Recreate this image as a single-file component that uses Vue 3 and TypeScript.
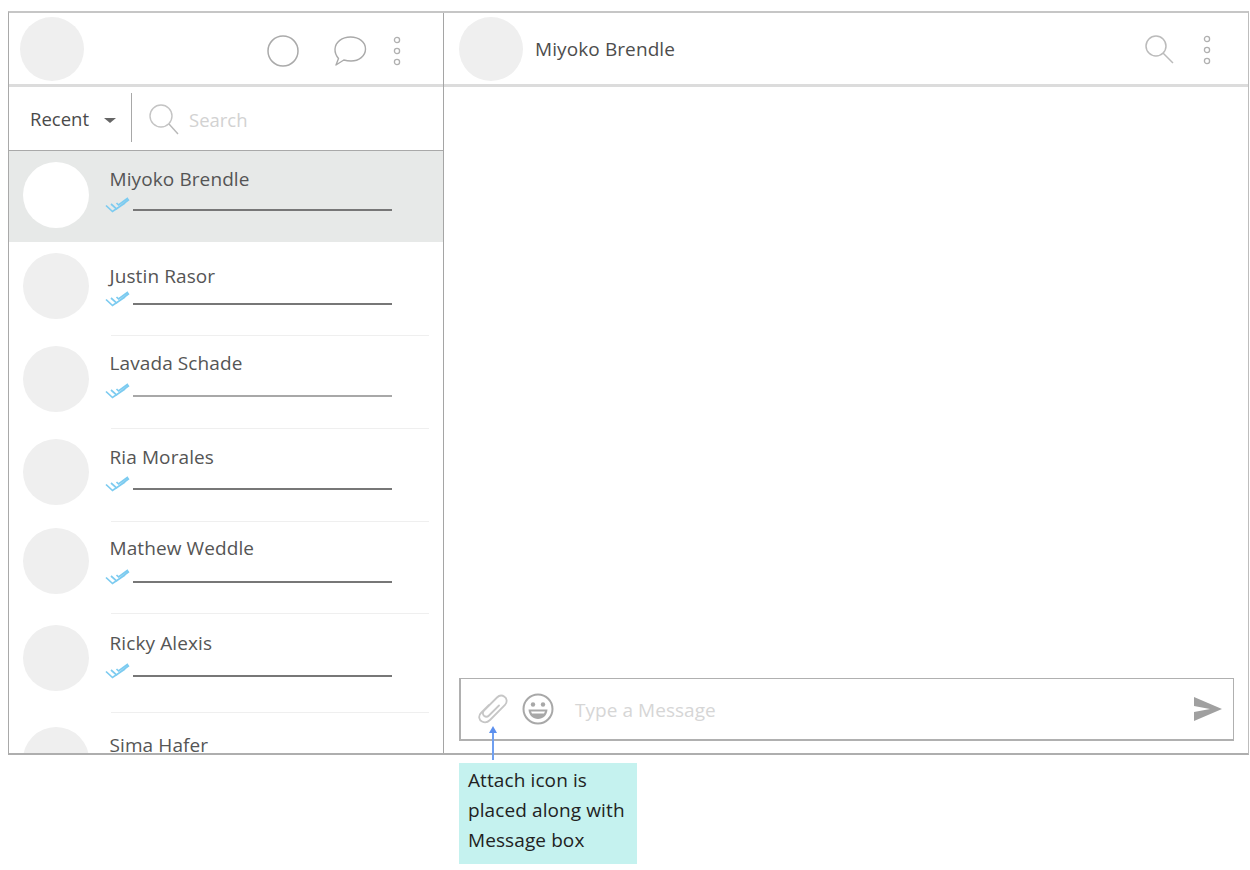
<script setup lang="ts">
interface Row { name: string; h: number; av: number; nameTop: number; lineTop: number; active?: boolean; divider?: boolean }
const rows: Row[] = [
  { name: 'Miyoko Brendle', h: 91, av: 11, nameTop: 15, lineTop: 58, active: true },
  { name: 'Justin Rasor', h: 93, av: 11, nameTop: 21, lineTop: 61, divider: true },
  { name: 'Lavada Schade', h: 93, av: 11, nameTop: 15, lineTop: 60, divider: true },
  { name: 'Ria Morales', h: 93, av: 11, nameTop: 16, lineTop: 60, divider: true },
  { name: 'Mathew Weddle', h: 92, av: 7, nameTop: 14, lineTop: 60, divider: true },
  { name: 'Ricky Alexis', h: 99, av: 12, nameTop: 17, lineTop: 62, divider: true },
  { name: 'Sima Hafer', h: 60, av: 15, nameTop: 20, lineTop: 200 }
]
const lineColor = (i: number) => (i === 2 ? '#a8a8a8' : '#777')
</script>

<template>
  <div class="page">
    <div class="frame">
      <aside class="left">
        <header class="head">
          <div class="avatar big"></div>
          <div class="head-icons">
            <svg width="34" height="34" viewBox="0 0 34 34"><circle cx="17" cy="17" r="15" fill="none" stroke="#aaa" stroke-width="1.5" /></svg>
            <svg class="bubble" width="34" height="32" viewBox="0 0 34 32"><path d="M3 30 L5.500 23.500 C3 20.500 1.800 17.500 2 14 C2.500 7 9 2 17.500 2 C26 2 32.500 7 32.500 14 C32.500 21 26 26 18 26 C15.500 26 13 25.600 10.800 25 Z" fill="none" stroke="#aaa" stroke-width="1.400" stroke-linejoin="round" /></svg>
            <svg class="dots" width="10" height="32" viewBox="0 0 10 32"><circle cx="5" cy="5" r="2.600" /><circle cx="5" cy="16" r="2.600" /><circle cx="5" cy="27" r="2.600" /></svg>
          </div>
        </header>
        <div class="filter">
          <span class="recent">Recent</span>
          <span class="caret"></span>
          <span class="sep"></span>
          <svg class="search-icon" width="32" height="34" viewBox="0 0 32 34"><circle cx="13" cy="14" r="11" fill="none" stroke="#c4c4c4" stroke-width="1.400" /><path d="M21 22 L30 32" stroke="#b8b8b8" stroke-width="1.400" /></svg>
          <span class="search-text">Search</span>
        </div>
        <div class="list">
          <div v-for="(r, i) in rows" :key="r.name" class="row" :class="{ active: r.active }" :style="{ height: r.h + 'px' }">
            <span v-if="r.divider" class="divider"></span>
            <div class="avatar item" :style="{ top: r.av + 'px' }"></div>
            <div class="name" :style="{ top: r.nameTop + 'px' }">{{ r.name }}</div>
            <template v-if="r.lineTop < r.h">
              <svg class="ticks" :style="{ top: r.lineTop - 12 + 'px' }" width="26" height="18" viewBox="0 0 26 18"><path d="M1 8.500 L7.500 14.500 L20 6 M6 7 L11.500 12 L24 2.500 M11.500 6 L13.500 8 L23 1" fill="none" stroke="#7ccbf0" stroke-width="1.700" /></svg>
              <span class="msg-line" :style="{ top: r.lineTop + 'px', background: lineColor(i) }"></span>
            </template>
          </div>
        </div>
      </aside>
      <main class="chat">
        <header class="head chat-head">
          <div class="avatar big chat-av"></div>
          <div class="chat-name">Miyoko Brendle</div>
          <svg class="chat-search" width="32" height="32" viewBox="0 0 32 32"><circle cx="12" cy="12" r="10" fill="none" stroke="#bbb" stroke-width="1.500" /><path d="M19 19 L29 29" stroke="#bbb" stroke-width="1.500" /></svg>
          <svg class="dots chat-dots" width="10" height="32" viewBox="0 0 10 32"><circle cx="5" cy="5" r="2.600" /><circle cx="5" cy="16" r="2.600" /><circle cx="5" cy="27" r="2.600" /></svg>
        </header>
        <div class="messages"></div>
        <div class="composer">
          <svg class="clip" width="32" height="30" viewBox="0 0 32 30"><path d="M12 11 L4 19 C1 22 2 26 5 27.500 C8 29 11 28 13 26 L28 11 C30.500 8 30 4.500 27.500 2.800 C25 1 22 1.500 20 3.500 L7 16.500 C5.500 18 5.500 20.500 7 21.800 C8.500 23 10.500 23 12 21.500 L22 11.500" fill="none" stroke="#c6c6c6" stroke-width="1.800" stroke-linecap="round" /></svg>
          <svg class="smile" width="32" height="32" viewBox="0 0 32 32"><circle cx="16" cy="16" r="14.500" fill="none" stroke="#a8a8a8" stroke-width="2" /><circle cx="11" cy="11.500" r="2.200" fill="#a8a8a8" /><circle cx="21" cy="11.500" r="2.200" fill="#a8a8a8" /><path d="M6.500 16.500 H25.500 C25 22.500 21 26 16 26 C11 26 7 22.500 6.500 16.500 Z" fill="#a8a8a8" /><path d="M9 18.500 H23 L22 20.500 H10 Z" fill="#fff" /></svg>
          <span class="placeholder">Type a Message</span>
          <svg class="send" width="28" height="24" viewBox="0 0 28 24"><path d="M0 0 L28 12 L0 24 L0 15 L16 12 L0 9 Z" fill="#a0a0a0" /></svg>
        </div>
      </main>
    </div>
    <div class="note">Attach icon is<br />placed along with<br />Message box</div>
    <svg class="arrow" width="10" height="34" viewBox="0 0 10 34"><path d="M5 6 V34" stroke="#6f9ff0" stroke-width="2" /><path d="M5 0 L9 7 H1 Z" fill="#5b8fee" /></svg>
  </div>
</template>

<style>
html, body { margin: 0; background: #fff; }
</style>

<style scoped>
.page {
  position: relative;
  width: 1250px;
  height: 870px;
  padding: 11px 0 0 8px;
  box-sizing: border-box;
  font-family: "Open Sans", "Noto Sans", sans-serif;
  overflow: hidden;
}
.frame {
  width: 1241px;
  height: 744px;
  box-sizing: border-box;
  display: flex;
  border: 1px solid #a9a9a9;
  border-top: 2px solid #c6c6c6;
  border-right-color: #bdbdbd;
  border-bottom: 2px solid #aeaeae;
}
.left {
  width: 434px;
  flex: none;
  display: flex;
  flex-direction: column;
  border-right: 1px solid #a5a5a5;
  box-sizing: content-box;
}
.chat { flex: 1; display: flex; flex-direction: column; min-width: 0; }
.head {
  height: 71px;
  flex: none;
  display: flex;
  align-items: center;
  border-bottom: 3px solid #dcdcdc;
}
.avatar { border-radius: 50%; background: #efefef; }
.big { width: 64px; height: 64px; margin-left: 11px; margin-top: 1px; }
.head-icons { margin-left: auto; display: flex; align-items: center; margin-right: 41px; margin-top: 4px; }
.bubble { margin-left: 33px; }
.dots { margin-left: 25px; fill: #fff; stroke: #b0b0b0; stroke-width: 1.300; }
.filter {
  height: 63px;
  flex: none;
  display: flex;
  align-items: center;
  border-bottom: 1px solid #a9a9a9;
  box-sizing: content-box;
  padding-left: 21px;
}
.recent { font-size: 18.500px; color: #4a4a4a; width: 74px; margin-top: -1px; }
.caret {
  width: 0; height: 0;
  border-left: 6px solid transparent;
  border-right: 6px solid transparent;
  border-top: 5px solid #666;
  margin-top: 3px;
}
.sep { width: 1px; height: 49px; margin-bottom: 2px; background: #a8a8a8; margin-left: 15px; }
.search-icon { margin-left: 16px; }
.search-text { font-size: 18.500px; color: #d2d2d2; margin-left: 9px; margin-top: 1px; }
.list { flex: 1; overflow: hidden; min-height: 0; }
.row { position: relative; flex: none; }
.row.active { background: #e7e9e8; }
.row.active .avatar { background: #fff; }
.divider { position: absolute; left: 102px; width: 318px; bottom: -1px; height: 1px; background: #efefef; }
.item { position: absolute; left: 14px; width: 66px; height: 66px; }
.name { position: absolute; left: 100.500px; font-size: 19px; line-height: 26px; color: #555; white-space: nowrap; letter-spacing: 0.100px; }
.ticks { position: absolute; left: 96px; }
.msg-line { position: absolute; left: 124px; width: 259px; height: 2px; }
.chat-av { margin-left: 15px; }
.chat-name { font-size: 19px; color: #4d4d4d; margin-left: 12px; letter-spacing: 0.100px; }
.chat-search { margin-left: auto; margin-top: 2px; }
.chat-dots { margin-left: 26px; margin-right: 36px; margin-top: 2px; }
.messages { flex: 1; }
.composer {
  height: 63px;
  flex: none;
  box-sizing: border-box;
  margin: 0 14px 12px 15px;
  border: 2px solid #b0b0b0;
  border-top-width: 1px;
  border-right-width: 1px;
  display: flex;
  align-items: center;
  padding-left: 16px;
}
.smile { margin-left: 13px; }
.placeholder { font-size: 19px; color: #d6d6d6; margin-left: 21px; margin-top: 2px; letter-spacing: 0.050px; }
.send { margin-left: auto; margin-right: 11px; }
.note {
  position: absolute;
  left: 459px;
  top: 763px;
  width: 178px;
  height: 101px;
  box-sizing: border-box;
  padding: 2px 0 0 9px;
  background: #c5f2ef;
  color: #222;
  font-family: "Open Sans", sans-serif;
  font-size: 19px;
  line-height: 30px;
  letter-spacing: 0.100px;
  white-space: nowrap;
}
.arrow { position: absolute; left: 488px; top: 726px; }
</style>
